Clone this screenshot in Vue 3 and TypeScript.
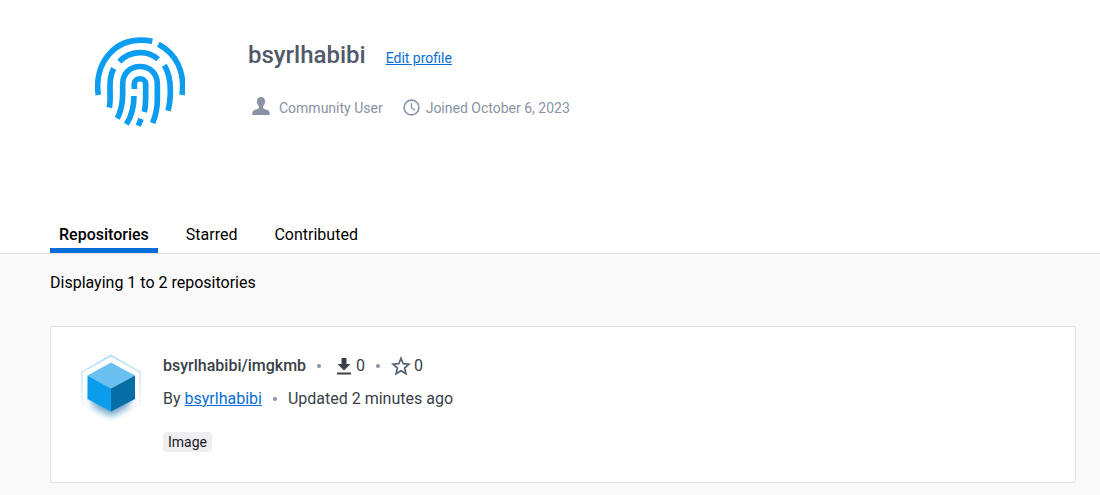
<script setup lang="ts">
import { ref } from 'vue'

interface Repository {
  owner: string
  name: string
  downloads: number
  stars: number
  updated: string
  kind: string
}

const username = 'bsyrlhabibi'
const tabs: string[] = ['Repositories', 'Starred', 'Contributed']
const activeTab = ref<string>('Repositories')
const repositories: Repository[] = [
  { owner: username, name: 'imgkmb', downloads: 0, stars: 0, updated: '2 minutes ago', kind: 'Image' },
]
</script>

<template>
  <div class="page">
    <header class="profile">
      <svg class="avatar" viewBox="30 27 270 270" aria-hidden="true">
        <g fill="none" stroke="#0d9df0" stroke-width="17" stroke-linejoin="round">
          <path d="M40 201C26 105 90 19 202 40" />
          <path d="M220 49C274 77 301 133 291 201" />
          <path d="M103 101C135 66 190 66 219 94" />
          <path d="M86 121C75 142 75 162 75 190C76 212 76 224 73 239" />
          <path d="M238 112C254 138 256 165 256 188C256 210 254 230 249 248" />
          <path d="M97 271C109 248 113 226 113 198V168C113 98 217 98 217 168V216C217 238 212 263 203 285" />
          <path d="M148 183V168C148 147 182 147 182 168V210C182 228 181 239 178 252" />
          <path d="M147 204C147 240 140 264 124 289" />
          <path d="M168 272L160 293" />
        </g>
      </svg>
      <div class="identity">
        <div class="name-row">
          <h1>{{ username }}</h1>
          <a href="#edit">Edit profile</a>
        </div>
        <div class="meta">
          <span class="meta-item">
            <svg class="user-icon" viewBox="0 0 18 18" aria-hidden="true">
              <path fill="#8993a5" d="M9 0C6.400 0 5 1.600 5 4.200C4.500 4.400 4.700 6 5.300 6.300C5.600 7.700 6.200 8.600 6.900 9.200V11C6.500 12.100 3.500 12.500 2 13.300C.7 14 .2 15.500 .2 18H17.800C17.800 15.500 17.300 14 16 13.300C14.500 12.500 11.500 12.100 11.100 11V9.200C11.800 8.600 12.400 7.700 12.700 6.300C13.300 6 13.500 4.400 13 4.200C13 1.600 11.600 0 9 0Z" />
            </svg>
            Community User
          </span>
          <span class="meta-item">
            <svg class="clock-icon" viewBox="0 0 17 17" aria-hidden="true">
              <g fill="none" stroke="#8993a5" stroke-width="1.600">
                <circle cx="8.500" cy="8.500" r="7.400" />
                <path d="M8.500 4V8.800L12 11.200" stroke-width="1.300" />
              </g>
            </svg>
            Joined October 6, 2023
          </span>
        </div>
      </div>
    </header>

    <nav class="tabs">
      <button
        v-for="tab in tabs"
        :key="tab"
        type="button"
        :class="['tab', { active: tab === activeTab }]"
        @click="activeTab = tab"
      >{{ tab }}</button>
    </nav>

    <main>
      <p class="summary">Displaying 1 to 2 repositories</p>
      <article v-for="repo in repositories" :key="repo.name" class="card">
        <svg class="cube" viewBox="0 0 60 68" aria-hidden="true">
          <defs>
            <linearGradient id="outline" x1="0" y1="0" x2="0" y2="1">
              <stop offset="0" stop-color="#8ccdf7" />
              <stop offset="1" stop-color="#e6f4fd" stop-opacity="0.300" />
            </linearGradient>
            <filter id="soft" x="-30%" y="-50%" width="160%" height="200%">
              <feGaussianBlur stdDeviation="3" />
            </filter>
          </defs>
          <path d="M30 1.500L59 18V50L30 66L1 50V18Z" fill="none" stroke="url(#outline)" stroke-width="1.200" />
          <path d="M8 42L30 34L52 42L46 54L30 62L14 54Z" fill="#086aa2" opacity="0.600" filter="url(#soft)" />
          <path d="M30 8.500L54 21.500L30 34.500L6.500 21.500Z" fill="#69c0f1" />
          <path d="M6.500 21.500L30 34.500V57.500L6.500 45Z" fill="#0b9cec" />
          <path d="M54 21.500L30 34.500V57.500L54 45Z" fill="#066da5" />
        </svg>
        <div class="details">
          <div class="title-row">
            <h2>{{ repo.owner }}/{{ repo.name }}</h2>
            <i class="dot"></i>
            <span class="stat">
              <svg class="download-icon" viewBox="0 0 14 17" role="img" aria-label="Downloads">
                <path fill="#393f49" d="M4.500 0H9.500V6H13.500L7 12.500L.5 6H4.500ZM0 14.500H14V16.500H0Z" />
              </svg>{{ repo.downloads }}
            </span>
            <i class="dot"></i>
            <span class="stat star">
              <svg class="star-icon" viewBox="0 0 20 20" role="img" aria-label="Stars">
                <path fill="none" stroke="#566072" stroke-width="1.700" d="M10 2.300L12.200 7.700L18 8.200L13.600 12L14.900 17.700L10 14.700L5.100 17.700L6.400 12L2 8.200L7.800 7.700Z" />
              </svg>{{ repo.stars }}
            </span>
          </div>
          <div class="by-row">
            <span>By <a href="#owner">{{ repo.owner }}</a></span>
            <i class="dot"></i>
            <span>Updated {{ repo.updated }}</span>
          </div>
          <span class="badge">{{ repo.kind }}</span>
        </div>
      </article>
    </main>
  </div>
</template>

<style>
body {
  background: #f9f9f9;
}
</style>

<style scoped>
.page {
  font: 400 16px/24px Roboto, sans-serif;
  color: #000;
}
h1,
h2,
p {
  margin: 0;
}
a {
  color: #086dd7;
}
.profile {
  display: flex;
  gap: 63px;
  padding: 37px 95px 88px;
  background: #fff;
}
.avatar {
  width: 90px;
  height: 90px;
  flex: none;
}
.name-row {
  display: flex;
  align-items: baseline;
  gap: 20px;
}
h1 {
  font-size: 24px;
  line-height: 36px;
  font-weight: 500;
  color: #505968;
}
.name-row a {
  font-size: 14px;
}
.meta {
  display: flex;
  gap: 20px;
  margin-top: 24px;
  padding-left: 4px;
  font-size: 14px;
  line-height: 20px;
  color: #8993a5;
}
.meta-item {
  display: flex;
  align-items: center;
}
.user-icon {
  width: 18px;
  height: 18px;
  margin: 0 9px 3px 0;
}
.clock-icon {
  width: 17px;
  height: 17px;
  margin-right: 6px;
}
.tabs {
  display: flex;
  gap: 19px;
  padding: 0 50px;
  background: #fff;
  border-bottom: 1px solid #e1e2e6;
}
.tab {
  padding: 8px 9px 1px;
  border: 0;
  border-bottom: 5px solid transparent;
  background: none;
  color: inherit;
  font: inherit;
  cursor: pointer;
}
.tab.active {
  border-color: #086dd7;
  font-weight: 500;
}
main {
  padding: 17px 24px 12px 50px;
}
.card {
  display: flex;
  gap: 22px;
  margin-top: 31px;
  padding: 27px 30px 28px;
  background: #fff;
  border: 1px solid #e1e2e6;
  border-radius: 2px;
  color: #393f49;
}
.cube {
  width: 60px;
  height: 68px;
  flex: none;
  overflow: visible;
}
.title-row,
.by-row {
  display: flex;
  align-items: center;
}
h2 {
  font-size: 16px;
  line-height: 24px;
  font-weight: 500;
}
.dot {
  width: 4px;
  height: 4px;
  margin: 0 11px;
  border-radius: 50%;
  background: #8993a5;
}
.stat {
  display: flex;
  align-items: center;
  gap: 5px;
}
.star {
  gap: 3px;
}
.download-icon {
  width: 14px;
  height: 17px;
  margin-left: 5px;
}
.star-icon {
  width: 20px;
  height: 20px;
}
.by-row {
  margin-top: 9px;
}
.badge {
  display: inline-block;
  margin-top: 21px;
  padding: 0 5px;
  border-radius: 4px;
  background: #efeff2;
  color: #17191e;
  font-size: 14px;
  line-height: 20px;
}
</style>
